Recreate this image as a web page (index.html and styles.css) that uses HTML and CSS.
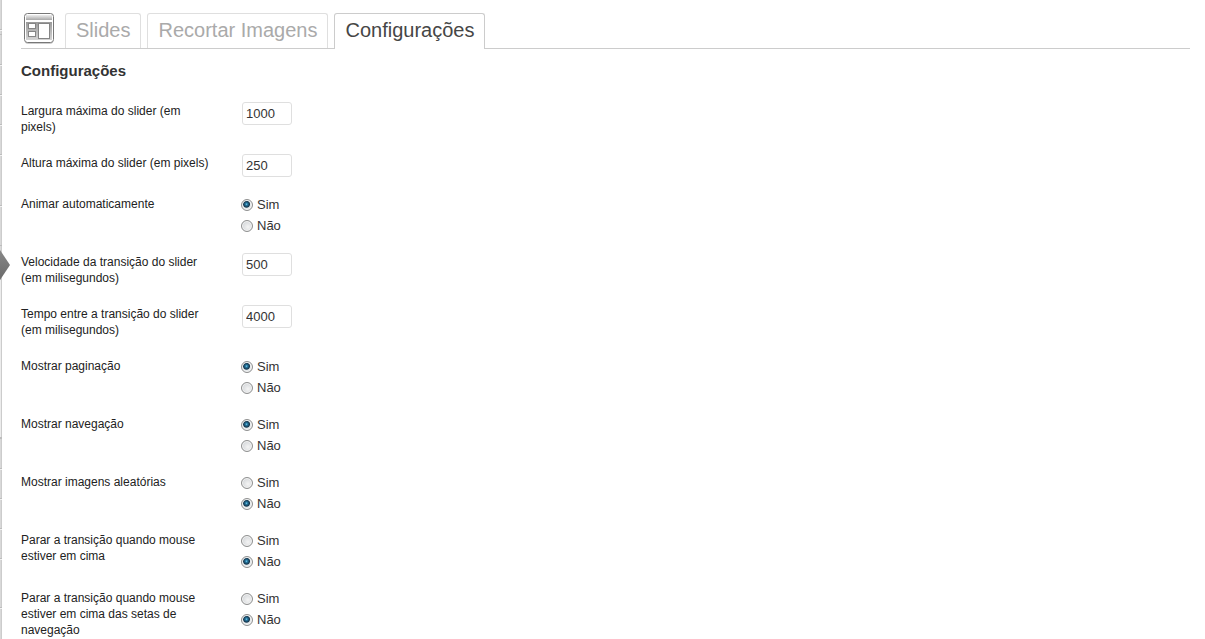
FILE: index.html
```html
<!DOCTYPE html>
<html lang="pt-BR">
<head>
<meta charset="utf-8">
<meta name="viewport" content="width=device-width, initial-scale=1">
<title>Configurações</title>
<link rel="stylesheet" href="styles.css">
</head>
<body>
<div class="page">
  <aside class="menu-edge" aria-hidden="true">
    <svg class="menu-lines" width="2" height="639" viewBox="0 0 2 639">
      <path d="M0 280H1V437H0Z" fill="#ececec"/>
      <path d="M0 29h2v1H0zM0 34h2v1H0zM0 64h2v1H0zM0 94h2v1H0zM0 124h2v1H0zM0 154h2v1H0zM0 205h2v1H0zM0 245h2v1H0zM0 437h2v2H0zM0 468h2v1H0zM0 498h2v1H0zM0 528h2v1H0zM0 558h2v1H0zM0 607h2v1H0z" fill="#bdbdbd"/>
      <path d="M0 30h2v1H0zM0 65h2v1H0zM0 95h2v1H0zM0 125h2v1H0zM0 155h2v1H0zM0 206h2v1H0zM0 469h2v1H0zM0 499h2v1H0zM0 529h2v1H0zM0 559h2v1H0zM0 608h2v1H0z" fill="#f2f2f2"/>
    </svg>
    <svg class="menu-arrow" width="10" height="30" viewBox="0 0 10 30">
      <defs><linearGradient id="arrow" x1="0" y1="0" x2="0" y2="1"><stop offset="0" stop-color="#888"/><stop offset="1" stop-color="#6a6a6a"/></linearGradient></defs>
      <path d="M0 0L10 15L0 30Z" fill="url(#arrow)"/>
    </svg>
  </aside>
  <main class="content">
    <nav class="tabs">
      <svg class="tabs-icon" width="32" height="34" viewBox="0 0 32 34" aria-hidden="true">
        <defs>
          <linearGradient id="bar" x1="0" y1="0" x2="0" y2="1"><stop offset="0" stop-color="#ededed"/><stop offset="1" stop-color="#a8a8a8"/></linearGradient>
          <linearGradient id="pane" x1="0" y1="0" x2="0" y2="1"><stop offset="0" stop-color="#9a9a9a"/><stop offset="1" stop-color="#d4d4d4"/></linearGradient>
        </defs>
        <rect x="2" y="3" width="28" height="29" rx="3" fill="#ccc"/>
        <rect x="1.500" y="1.500" width="29" height="29" rx="3" fill="#fff" stroke="#777"/>
        <rect x="3" y="3" width="26" height="5" fill="url(#bar)"/>
        <rect x="3" y="10" width="26" height="18" fill="url(#pane)"/>
        <g fill="#fff" stroke="#858585">
          <rect x="5.500" y="11.500" width="7" height="5"/>
          <rect x="5.500" y="19.500" width="7" height="5"/>
          <rect x="15.500" y="11.500" width="11" height="15"/>
        </g>
      </svg>
      <a class="tab" href="#slides">Slides</a>
      <a class="tab" href="#recortar">Recortar Imagens</a>
      <a class="tab tab-active" href="#config" aria-current="page">Configurações</a>
    </nav>
    <h3 class="title">Configurações</h3>
    <form class="settings">
      <div class="row">
        <label class="name" for="largura">Largura máxima do slider (em pixels)</label>
        <div class="field"><input class="text" id="largura" type="text" value="1000"></div>
      </div>
      <div class="row">
        <label class="name" for="altura">Altura máxima do slider (em pixels)</label>
        <div class="field"><input class="text" id="altura" type="text" value="250"></div>
      </div>
      <div class="row" role="radiogroup" aria-labelledby="animar">
        <span class="name" id="animar">Animar automaticamente</span>
        <div class="field">
          <label class="choice"><input class="radio" type="radio" name="animar" checked>Sim</label>
          <label class="choice"><input class="radio" type="radio" name="animar">Não</label>
        </div>
      </div>
      <div class="row">
        <label class="name" for="velocidade">Velocidade da transição do slider (em milisegundos)</label>
        <div class="field"><input class="text" id="velocidade" type="text" value="500"></div>
      </div>
      <div class="row">
        <label class="name" for="tempo">Tempo entre a transição do slider (em milisegundos)</label>
        <div class="field"><input class="text" id="tempo" type="text" value="4000"></div>
      </div>
      <div class="row" role="radiogroup" aria-labelledby="paginacao">
        <span class="name" id="paginacao">Mostrar paginação</span>
        <div class="field">
          <label class="choice"><input class="radio" type="radio" name="paginacao" checked>Sim</label>
          <label class="choice"><input class="radio" type="radio" name="paginacao">Não</label>
        </div>
      </div>
      <div class="row" role="radiogroup" aria-labelledby="navegacao">
        <span class="name" id="navegacao">Mostrar navegação</span>
        <div class="field">
          <label class="choice"><input class="radio" type="radio" name="navegacao" checked>Sim</label>
          <label class="choice"><input class="radio" type="radio" name="navegacao">Não</label>
        </div>
      </div>
      <div class="row" role="radiogroup" aria-labelledby="aleatorias">
        <span class="name" id="aleatorias">Mostrar imagens aleatórias</span>
        <div class="field">
          <label class="choice"><input class="radio" type="radio" name="aleatorias">Sim</label>
          <label class="choice"><input class="radio" type="radio" name="aleatorias" checked>Não</label>
        </div>
      </div>
      <div class="row" role="radiogroup" aria-labelledby="parar">
        <span class="name" id="parar">Parar a transição quando mouse estiver em cima</span>
        <div class="field">
          <label class="choice"><input class="radio" type="radio" name="parar">Sim</label>
          <label class="choice"><input class="radio" type="radio" name="parar" checked>Não</label>
        </div>
      </div>
      <div class="row" role="radiogroup" aria-labelledby="setas">
        <span class="name" id="setas">Parar a transição quando mouse estiver em cima das setas de navegação</span>
        <div class="field">
          <label class="choice"><input class="radio" type="radio" name="setas">Sim</label>
          <label class="choice"><input class="radio" type="radio" name="setas" checked>Não</label>
        </div>
      </div>
    </form>
  </main>
</div>
</body>
</html>
```
FILE: styles.css
```css
* { box-sizing: border-box; }
body {
  margin: 0;
  background: #fff;
  color: #333;
  font-family: "Liberation Sans", Arial, sans-serif;
  font-size: 13px;
}
.page {
  display: flex;
  height: 100vh;
  overflow: hidden;
}
.menu-edge {
  position: relative;
  flex: none;
  width: 2px;
  background: #d9d9d9;
  border-right: 1px solid #ccc;
}
.menu-lines {
  position: absolute;
  top: 0;
  left: 0;
}
.menu-arrow {
  position: absolute;
  top: 250px;
  left: 0;
}
.content {
  flex: 1;
  min-width: 0;
  padding: 12px 15px 0 19px;
}
.tabs {
  display: flex;
  align-items: flex-end;
  gap: 6px;
  height: 37px;
  border-bottom: 1px solid #ccc;
}
.tabs-icon {
  flex: none;
  align-self: flex-start;
  margin: 0 4px 0 2px;
}
.tab {
  height: 35px;
  padding: 0 10px;
  border: 1px solid #dfdfdf;
  border-bottom: 0;
  border-radius: 3px 3px 0 0;
  color: #aaa;
  font-size: 20px;
  line-height: 32px;
  text-decoration: none;
  white-space: nowrap;
}
.tab-active {
  height: 36px;
  margin-bottom: -1px;
  border-color: #ccc;
  background: #fff;
  color: #464646;
}
.title {
  margin: 12px 0;
  font-size: 15px;
  line-height: 20px;
}
.row {
  display: grid;
  grid-template-columns: 195px 1fr;
  column-gap: 25px;
}
.name {
  padding: 10px 0;
  color: #222;
  font-size: 12px;
  line-height: 16px;
}
.field { padding: 8px 0; }
.text {
  display: block;
  width: 50px;
  height: 23px;
  margin: 1px;
  padding: 3px;
  border: 1px solid #dfdfdf;
  border-radius: 3px;
  background: #fff;
  color: #333;
  font: inherit;
}
.choice {
  display: flex;
  align-items: center;
  gap: 4px;
  width: max-content;
  height: 21px;
}
.radio {
  appearance: none;
  width: 12px;
  height: 12px;
  margin: 0;
  border: 1px solid #8e8f8f;
  border-radius: 50%;
  background: radial-gradient(circle at 60% 60%, #f4f4f4, #c8ccd0);
  box-shadow: inset 0 0 0 1px #f4f4f4;
}
.radio:checked {
  background: radial-gradient(circle at 45% 42%, #7fd4f2 0, #2b7fa8 1px, #12344c 3px, #e4e8ea 4px);
}
```
